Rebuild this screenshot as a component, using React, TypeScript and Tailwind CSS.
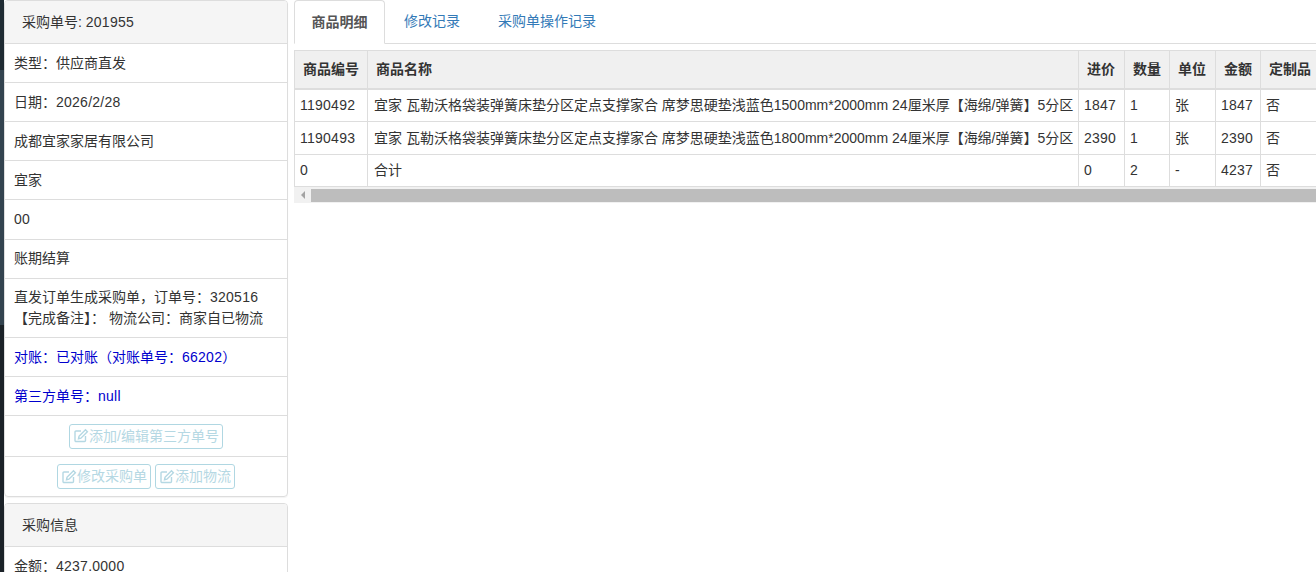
import React from "react";

const rows = [
  { text: "类型：供应商直发", h: "h-[39px]" },
  { text: <>日期：<Num>2026/2/28</Num></>, h: "h-[39px]" },
  { text: "成都宜家家居有限公司", h: "h-[39px]" },
  { text: "宜家", h: "h-[39px]" },
  { text: <Num>00</Num>, h: "h-[40px]" },
  { text: "账期结算", h: "h-[39px] pb-[1px]" },
];

const goods = [
  { id: "1190492", name: "宜家 瓦勒沃格袋装弹簧床垫分区定点支撑家合 席梦思硬垫浅蓝色1500mm*2000mm 24厘米厚【海绵/弹簧】5分区", price: "1847", qty: "1", unit: "张", total: "1847", custom: "否", h: "h-[33px]" },
  { id: "1190493", name: "宜家 瓦勒沃格袋装弹簧床垫分区定点支撑家合 席梦思硬垫浅蓝色1800mm*2000mm 24厘米厚【海绵/弹簧】5分区", price: "2390", qty: "1", unit: "张", total: "2390", custom: "否", h: "h-[33px]" },
  { id: "0", name: "合计", price: "0", qty: "2", unit: "-", total: "4237", custom: "否", h: "h-[32px]" },
];

function Num({ children }: { children: React.ReactNode }) {
  return <span className="tracking-[0.25px]">{children}</span>;
}

const EditIcon = () => (
  <svg viewBox="0 0 16 16" className="w-4 h-4 shrink-0" fill="none" stroke="currentColor" strokeWidth="1.4">
    <path d="M12.500 8v4.500a1 1 0 0 1-1 1H3a1 1 0 0 1-1-1V4a1 1 0 0 1 1-1h5" />
    <path d="M6 8.300 12.500 1.800l1.900 1.900L7.900 10.200 5.500 10.800z" />
  </svg>
);

const Btn = ({ label }: { label: string }) => (
  <span className="inline-flex items-center h-[25px] px-[3px] border border-[#b0d7e2] rounded-[3px] text-[#b5d8e3] text-[14px] whitespace-nowrap">
    <EditIcon />
    {label}
  </span>
);

const App = () => {
  return (
    <div className="w-[1316px] h-[572px] overflow-hidden flex bg-white text-[14px] text-[#333] font-['Liberation_Sans','Noto_Sans_CJK_SC',sans-serif]">
      <div className="w-[4px] shrink-0 flex flex-col">
        <div className="h-[70px] bg-[#1f2b33]" />
        <div className="h-[255px] bg-[#33434f]" />
        <div className="flex-1 bg-[#1b2228]" />
      </div>
      <div className="w-[284px] shrink-0 mr-[6px]">
        <div className="border border-[#ddd] rounded-[4px] mb-[6px] shadow-[0_1px_1px_rgba(0,0,0,0.05)]">
          <div className="h-[43px] px-[17px] flex items-center bg-[#f5f5f5] border-b border-[#ddd] rounded-t-[3px]">
            <span>采购单号: <Num>201955</Num></span>
          </div>
          {rows.map((row, i) => (
            <div key={"info-row-" + i} className={row.h + " px-[9px] flex items-center border-b border-[#ddd]"}>
              <span>{row.text}</span>
            </div>
          ))}
          <div className="h-[59px] px-[9px] flex flex-col justify-center border-b border-[#ddd] leading-[21px]">
            <span>直发订单生成采购单，订单号：<Num>320516</Num></span>
            <span>【完成备注】： 物流公司：商家自已物流</span>
          </div>
          <div className="h-[39px] px-[9px] flex items-center border-b border-[#ddd] text-[#0000cd]">
            <span>对账：已对账（对账单号：<Num>66202</Num>）</span>
          </div>
          <div className="h-[39px] px-[9px] flex items-center border-b border-[#ddd] text-[#0000cd]">
            <span>第三方单号：<Num>null</Num></span>
          </div>
          <div className="h-[41px] flex items-center justify-center border-b border-[#ddd]">
            <Btn label="添加/编辑第三方单号" />
          </div>
          <div className="h-[39px] flex items-center justify-center gap-[4px]">
            <Btn label="修改采购单" />
            <Btn label="添加物流" />
          </div>
        </div>
        <div className="border border-[#ddd] rounded-[4px]">
          <div className="h-[43px] px-[17px] flex items-center bg-[#f5f5f5] border-b border-[#ddd] rounded-t-[3px]">采购信息</div>
          <div className="h-[39px] px-[9px] flex items-center">
            <span>金额：<Num>4237.0000</Num></span>
          </div>
        </div>
      </div>
      <div className="flex-1 min-w-0">
        <div className="h-[44px] flex border-b border-[#ddd]">
          <div className="h-[44px] w-[91px] flex items-center justify-center bg-white border border-[#ddd] border-b-white rounded-t-[4px] text-[#555] font-bold">商品明细</div>
          <div className="h-[43px] w-[94px] flex items-center justify-center text-[#337ab7]">修改记录</div>
          <div className="h-[43px] w-[136px] flex items-center justify-center text-[#337ab7]">采购单操作记录</div>
        </div>
        <div className="mt-[6px] overflow-hidden">
          <table className="border-collapse table-fixed w-[1100px]">
            <colgroup>
              <col className="w-[73px]" />
              <col className="w-[711px]" />
              <col className="w-[46px]" />
              <col className="w-[45px]" />
              <col className="w-[46px]" />
              <col className="w-[45px]" />
              <col className="w-[134px]" />
            </colgroup>
            <thead>
              <tr className="h-[38px] bg-[#f0f0f0] font-bold">
                {["商品编号", "商品名称", "进价", "数量", "单位", "金额", "定制品"].map((h, i) => (
                  <th key={"goods-head-" + i} className="border border-[#ddd] border-b-2 px-[8px] text-left whitespace-nowrap">{h}</th>
                ))}
              </tr>
            </thead>
            <tbody>
              {goods.map((g, i) => (
                <tr key={"goods-row-" + i} className={g.h}>
                  <td className="border border-[#ddd] px-[5px] whitespace-nowrap tracking-[0.25px]">{g.id}</td>
                  <td className="border border-[#ddd] px-[6px] whitespace-nowrap overflow-hidden">{g.name}</td>
                  <td className="border border-[#ddd] px-[5px] tracking-[0.25px]">{g.price}</td>
                  <td className="border border-[#ddd] px-[5px]">{g.qty}</td>
                  <td className="border border-[#ddd] px-[5px]">{g.unit}</td>
                  <td className="border border-[#ddd] px-[5px] tracking-[0.25px]">{g.total}</td>
                  <td className="border border-[#ddd] px-[5px]">{g.custom}</td>
                </tr>
              ))}
            </tbody>
          </table>
          <div className="h-[16px] bg-[#f1f1f1] flex items-center">
            <div className="w-[17px] h-full flex items-center justify-center">
              <div className="w-0 h-0 border-y-[4px] border-y-transparent border-r-[4px] border-r-[#a3a3a3]" />
            </div>
            <div className="flex-1 h-[13px] bg-[#bdbdbd]" />
          </div>
        </div>
      </div>
    </div>
  );
};

export default App;
